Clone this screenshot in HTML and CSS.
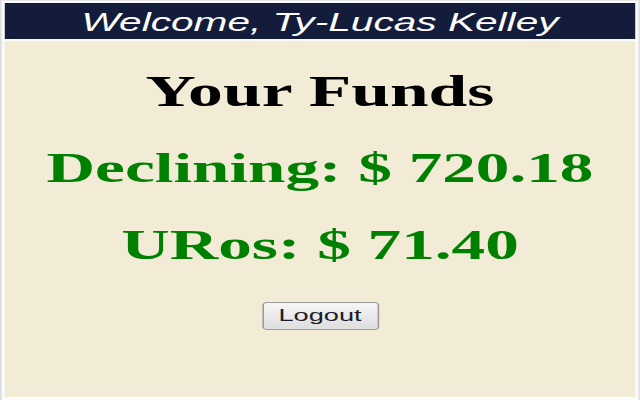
FILE: index.html
```html
<!DOCTYPE html>
<html>
<head>
<meta charset="utf-8">
<link rel="stylesheet" href="styles.css">
</head>
<body>
<div class="app">
  <div class="header">Welcome, Ty-Lucas Kelley</div>
  <div class="main">
    <h1 class="title">Your Funds</h1>
    <div class="amount">Declining: $ 720.18</div>
    <div class="amount">URos: $ 71.40</div>
    <button class="logout" type="button">Logout</button>
  </div>
</div>
</body>
</html>
```
FILE: styles.css
```css
html, body {
  margin: 0;
  padding: 0;
  background: #fbfbfb;
}
.app {
  width: 400px;
  height: 400px;
  box-sizing: border-box;
  padding: 2px 2px 3px 2px;
  border-left: 1px solid #dcdcdc;
  border-top: 1px solid #e6e6e6;
  border-right: 1px solid #e0e0e0;
  display: flex;
  flex-direction: column;
  gap: 2px;
  transform: scaleX(1.6);
  transform-origin: 0 0;
  background: #fbfbfb;
}
.header {
  height: 36px;
  flex: none;
  background: #131d3b;
  color: #ffffff;
  font-family: "Liberation Sans", Arial, sans-serif;
  font-style: italic;
  font-size: 25.4px;
  line-height: 39px;
  text-align: center;
  white-space: nowrap;
}
.main {
  flex: 1;
  background: #f2ecd6;
  text-align: center;
  padding-top: 12px;
}
.title, .amount {
  margin: 0;
  font-family: "Liberation Serif", "Times New Roman", serif;
  font-weight: bold;
  font-size: 42px;
  line-height: 77px;
  white-space: nowrap;
}
.title {
  color: #000000;
  font-size: 43.5px;
}
.amount {
  color: #008000;
}
.logout {
  margin-top: 18px;
  width: 73px;
  height: 28px;
  padding: 0;
  font-family: "Liberation Sans", Arial, sans-serif;
  font-size: 17px;
  color: #1c1c2c;
  background: linear-gradient(#f6f6f6, #dedede);
  border: 1px solid #9a9a9a;
  border-radius: 3px;
}
```
